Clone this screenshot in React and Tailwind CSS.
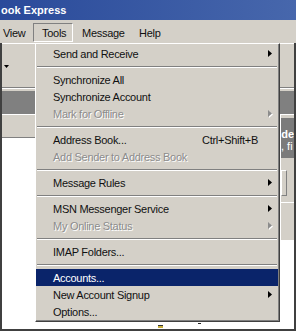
import React from "react";

const Arrow = ({ disabled }) => (
  <svg width="4" height="7" viewBox="0 0 4 7" className={disabled ? "drop-shadow-[1px_1px_0_#ffffff]" : ""}>
    <polygon points="0,0 4,3.5 0,7" fill={disabled ? "#8c8c8c" : "#000000"} />
  </svg>
);

const Item = ({ label, arrow, shortcut, disabled, active }) => (
  <div
    className={
      "h-[17px] flex items-center pl-[17px] whitespace-nowrap " +
      (active ? "bg-[#0a246a] text-white " : "") +
      (disabled ? "text-[#8c8c8c] [text-shadow:1px_1px_0_#ffffff] " : "") +
      (shortcut ? "pr-[20px]" : "pr-[6px]")
    }
  >
    <span>{label}</span>
    {shortcut && <span className="ml-auto">{shortcut}</span>}
    {arrow && (
      <span className="ml-auto flex items-center">
        <Arrow disabled={disabled} />
      </span>
    )}
  </div>
);

const Sep = () => (
  <div className="h-[9px] pt-[4px] px-[1px]">
    <div className="h-px bg-[#808080]" />
    <div className="h-px bg-white" />
  </div>
);

export default function App() {
  return (
    <div className="relative w-[296px] h-[331px] overflow-hidden bg-white font-['Liberation_Sans',Arial,sans-serif] text-[11px] leading-[12px] tracking-[-0.28px] text-[#111]">
      {/* Title bar */}
      <div className="h-[20px] bg-linear-to-r from-[#2a4a9a] to-[#4767ac] flex items-center pl-[1px] font-bold text-white tracking-normal">
        ook Express
      </div>

      {/* Menu bar */}
      <div className="h-[23px] bg-[#d4d0c8] flex items-start pt-[3px]">
        <div className="w-[33px] h-[19px] flex items-center pl-[3px]">View</div>
        <div className="w-[40px] h-[19px] flex items-center pl-[8px] border border-t-[#808080] border-l-[#808080] border-r-white border-b-white">
          Tools
        </div>
        <div className="h-[19px] flex items-center pl-[9px] w-[66px]">Message</div>
        <div className="h-[19px] flex items-center">Help</div>
      </div>

      {/* Window body */}
      <div className="h-[288px] flex flex-col border-l-2 border-r-2 border-b-2 border-[#404040]">
        {/* Toolbar */}
        <div className="h-[44px] bg-[#d4d0c8] border-t border-white pt-[21px] pl-[2px]">
          <svg width="5" height="3" viewBox="0 0 5 3">
            <polygon points="0,0 5,0 2.5,3" fill="#000" />
          </svg>
        </div>
        <div className="h-px bg-[#808080]" />
        <div className="h-px bg-white" />
        <div className="h-[2px] bg-[#d4d0c8]" />
        <div className="h-[23px] bg-[#808080]" />

        {/* Lower section */}
        <div className="flex-1 flex">
          {/* Folder pane */}
          <div className="w-[33px] flex flex-col">
            <div className="h-px bg-white" />
            <div className="h-[22px] bg-[#d4d0c8]" />
            <div className="h-px bg-[#808080]" />
            <div className="flex-1 bg-white" />
          </div>
          {/* Middle (under menu) */}
          <div className="w-[246px] flex flex-col bg-white">
            <div className="flex-1" />
            <div className="h-[7px] flex items-start">
              <div className="ml-[123px] mt-[3px] w-[5px] h-[3px] bg-[#c8b040] border-t border-[#333]" />
              <div className="ml-[35px] mt-[1px] w-[3px] h-px bg-[#222]" />
            </div>
          </div>
          {/* Right start page */}
          <div className="w-[13px] flex flex-col overflow-hidden">
            <div className="h-px bg-white" />
            <div className="h-[3px] bg-[#d4d0c8]" />
            <div className="h-[40px] bg-[#7b7b7b] pt-[10px] text-white whitespace-nowrap tracking-normal">
              <div className="font-bold text-right">de</div>
              <div>, fi</div>
            </div>
            <div className="h-[82px] bg-[#d4d0c8] pt-[12px] flex flex-col">
              <div className="w-[6px] h-[26px] border border-l-white border-t-white border-r-[#808080] border-b-[#808080]" />
              <div className="mt-[6px] h-px bg-white" />
            </div>
            <div className="flex-1 bg-white" />
          </div>
        </div>
      </div>

      {/* Tools dropdown menu */}
      <div className="absolute left-[35px] top-[43px] w-[245px] border border-t-white border-l-white border-r-[#404040] border-b-[#404040] bg-[#d4d0c8]">
        <div className="pt-[1px] pb-[1px] pr-[1px] shadow-[inset_-1px_-1px_0_#808080]">
          <Item label="Send and Receive" arrow />
          <Sep />
          <Item label="Synchronize All" />
          <Item label="Synchronize Account" />
          <Item label="Mark for Offline" arrow disabled />
          <Sep />
          <Item label="Address Book..." shortcut="Ctrl+Shift+B" />
          <Item label="Add Sender to Address Book" disabled />
          <Sep />
          <Item label="Message Rules" arrow />
          <Sep />
          <Item label="MSN Messenger Service" arrow />
          <Item label="My Online Status" arrow disabled />
          <Sep />
          <Item label="IMAP Folders..." />
          <Sep />
          <Item label="Accounts..." active />
          <Item label="New Account Signup" arrow />
          <Item label="Options..." />
        </div>
      </div>
    </div>
  );
}
